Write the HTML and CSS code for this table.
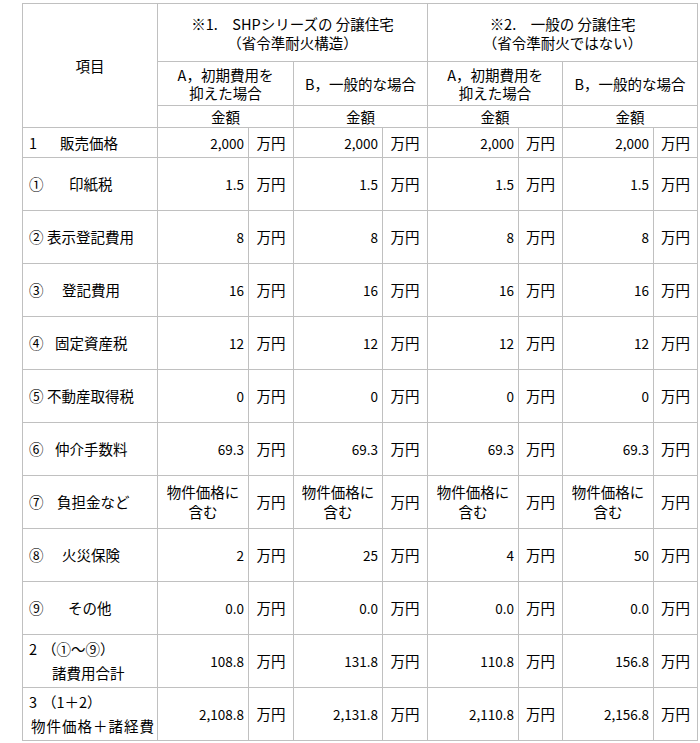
FILE: index.html
```html
<!DOCTYPE html>
<html lang="ja">
<head>
<meta charset="utf-8">
<link rel="stylesheet" href="styles.css">
</head>
<body>
<table class="cost">
  <colgroup>
    <col class="c-item">
    <col class="c-num"><col class="c-unit">
    <col class="c-num2"><col class="c-unit">
    <col class="c-num"><col class="c-unit2">
    <col class="c-num"><col class="c-unit2">
  </colgroup>
  <tr class="h1">
    <td rowspan="3" class="ctr">項目</td>
    <td colspan="4" class="ctr lh19">※1.　SHPシリーズの 分譲住宅<br>（省令準耐火構造）</td>
    <td colspan="4" class="ctr lh19">※2.　一般の 分譲住宅<br>（省令準耐火ではない）</td>
  </tr>
  <tr class="h2">
    <td colspan="2" class="ctr lh17">A，初期費用を<br>抑えた場合</td>
    <td colspan="2" class="ctr">B，一般的な場合</td>
    <td colspan="2" class="ctr lh17">A，初期費用を<br>抑えた場合</td>
    <td colspan="2" class="ctr">B，一般的な場合</td>
  </tr>
  <tr class="h3">
    <td colspan="2" class="ctr">金額</td>
    <td colspan="2" class="ctr">金額</td>
    <td colspan="2" class="ctr">金額</td>
    <td colspan="2" class="ctr">金額</td>
  </tr>
  <tr class="r1">
    <td class="lbl"><span class="mk w31">1</span>販売価格</td>
    <td class="num">2,000</td><td class="unit">万円</td>
    <td class="num">2,000</td><td class="unit">万円</td>
    <td class="num">2,000</td><td class="unit">万円</td>
    <td class="num">2,000</td><td class="unit">万円</td>
  </tr>
  <tr class="r">
    <td class="lbl"><span class="mk w40">①</span>印紙税</td>
    <td class="num">1.5</td><td class="unit">万円</td>
    <td class="num">1.5</td><td class="unit">万円</td>
    <td class="num">1.5</td><td class="unit">万円</td>
    <td class="num">1.5</td><td class="unit">万円</td>
  </tr>
  <tr class="r">
    <td class="lbl"><span class="mk w18">②</span>表示登記費用</td>
    <td class="num">8</td><td class="unit">万円</td>
    <td class="num">8</td><td class="unit">万円</td>
    <td class="num">8</td><td class="unit">万円</td>
    <td class="num">8</td><td class="unit">万円</td>
  </tr>
  <tr class="r">
    <td class="lbl"><span class="mk w33">③</span>登記費用</td>
    <td class="num">16</td><td class="unit">万円</td>
    <td class="num">16</td><td class="unit">万円</td>
    <td class="num">16</td><td class="unit">万円</td>
    <td class="num">16</td><td class="unit">万円</td>
  </tr>
  <tr class="r">
    <td class="lbl"><span class="mk w26">④</span>固定資産税</td>
    <td class="num">12</td><td class="unit">万円</td>
    <td class="num">12</td><td class="unit">万円</td>
    <td class="num">12</td><td class="unit">万円</td>
    <td class="num">12</td><td class="unit">万円</td>
  </tr>
  <tr class="r">
    <td class="lbl"><span class="mk w18">⑤</span>不動産取得税</td>
    <td class="num">0</td><td class="unit">万円</td>
    <td class="num">0</td><td class="unit">万円</td>
    <td class="num">0</td><td class="unit">万円</td>
    <td class="num">0</td><td class="unit">万円</td>
  </tr>
  <tr class="r">
    <td class="lbl"><span class="mk w26">⑥</span>仲介手数料</td>
    <td class="num">69.3</td><td class="unit">万円</td>
    <td class="num">69.3</td><td class="unit">万円</td>
    <td class="num">69.3</td><td class="unit">万円</td>
    <td class="num">69.3</td><td class="unit">万円</td>
  </tr>
  <tr class="r">
    <td class="lbl"><span class="mk w28">⑦</span>負担金など</td>
    <td class="ctr lh20">物件価格に<br>含む</td><td class="unit">万円</td>
    <td class="ctr lh20">物件価格に<br>含む</td><td class="unit">万円</td>
    <td class="ctr lh20">物件価格に<br>含む</td><td class="unit">万円</td>
    <td class="ctr lh20">物件価格に<br>含む</td><td class="unit">万円</td>
  </tr>
  <tr class="r">
    <td class="lbl"><span class="mk w33">⑧</span>火災保険</td>
    <td class="num">2</td><td class="unit">万円</td>
    <td class="num">25</td><td class="unit">万円</td>
    <td class="num">4</td><td class="unit">万円</td>
    <td class="num">50</td><td class="unit">万円</td>
  </tr>
  <tr class="r">
    <td class="lbl"><span class="mk w39">⑨</span>その他</td>
    <td class="num">0.0</td><td class="unit">万円</td>
    <td class="num">0.0</td><td class="unit">万円</td>
    <td class="num">0.0</td><td class="unit">万円</td>
    <td class="num">0.0</td><td class="unit">万円</td>
  </tr>
  <tr class="r">
    <td class="lbl lh24"><span class="mk w13">2</span>（①～⑨）<br><span class="sub">諸費用合計</span></td>
    <td class="num">108.8</td><td class="unit">万円</td>
    <td class="num">131.8</td><td class="unit">万円</td>
    <td class="num">110.8</td><td class="unit">万円</td>
    <td class="num">156.8</td><td class="unit">万円</td>
  </tr>
  <tr class="r">
    <td class="lbl lh24"><span class="mk w13">3</span>（1＋2）<br><span class="wide">物件価格＋諸経費</span></td>
    <td class="num">2,108.8</td><td class="unit">万円</td>
    <td class="num">2,131.8</td><td class="unit">万円</td>
    <td class="num">2,110.8</td><td class="unit">万円</td>
    <td class="num">2,156.8</td><td class="unit">万円</td>
  </tr>
</table>
</body>
</html>
```
FILE: styles.css
```css
html, body {
  margin: 0;
  padding: 0;
  background: #ffffff;
}
body {
  padding: 3px 0 0 22px;
  font-family: "Noto Sans CJK JP", "Noto Sans", sans-serif;
  font-size: 14.5px;
  color: #000000;
}
.cost {
  border-collapse: collapse;
  table-layout: fixed;
  width: 676px;
}
.cost td {
  border: 1px solid #c0c0c0;
  padding: 0;
  line-height: 18px;
  vertical-align: middle;
  white-space: nowrap;
  overflow: hidden;
}
.c-item { width: 135px; }
.c-num { width: 91px; }
.c-num2 { width: 89px; }
.c-unit { width: 45px; }
.c-unit2 { width: 44px; }

.h1 { height: 58px; }
.h2 { height: 44px; }
.h3 { height: 22px; }
.r1 { height: 30px; }
.r { height: 53px; }

.ctr { text-align: center; }
.cost td.lh19 { line-height: 19px; }
.cost td.lh20 { line-height: 20px; }
.cost td.lh24 { line-height: 24px; }
.cost td.lh17 { line-height: 18px; }

.num {
  text-align: right;
  font-size: 13.5px;
}
.cost td.num { padding-right: 4px; }
.unit { text-align: center; }
.lbl { text-align: left; }
.cost td.lbl { padding-left: 6px; }
.mk { display: inline-block; }
.w13 { width: 13px; }
.w18 { width: 18px; }
.w26 { width: 26px; }
.w28 { width: 28px; }
.w31 { width: 31px; }
.w33 { width: 33px; }
.w39 { width: 39px; }
.w40 { width: 40px; }
.sub { padding-left: 23px; }
.wide { margin-left: 2px; letter-spacing: 1px; }
```
